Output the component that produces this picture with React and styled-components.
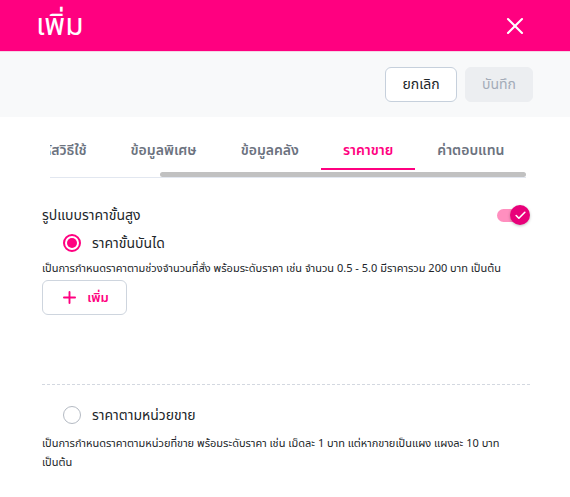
import React, { useLayoutEffect, useRef, useState } from "react";
import styled, { createGlobalStyle } from "styled-components";
import { X, Plus, Check } from "lucide-react";

const PINK = "#ff0080";

const GlobalStyle = createGlobalStyle`
  body {
    margin: 0;
    background: #fff;
    font-family: "Noto Sans Thai", "Noto Sans", "Liberation Sans", sans-serif;
    color: #212529;
  }
`;

const Page = styled.div`
  width: 570px;
  min-height: 497px;
  background: #fff;
`;

const Header = styled.header`
  height: 52px;
  background: ${PINK};
  display: flex;
  align-items: center;
  justify-content: space-between;
  padding: 0 41px 0 36px;
  box-sizing: border-box;
  border-bottom: 1px solid #f4d6e5;
`;

const Title = styled.h1`
  margin: 0;
  font-size: 30px;
  font-weight: 400;
  color: #fff;
  line-height: 1;
`;

const CloseButton = styled.button`
  border: 0;
  background: transparent;
  color: #fff;
  padding: 0;
  display: flex;
  cursor: pointer;
`;

const Toolbar = styled.div`
  height: 65px;
  background: #f8f9fa;
  display: flex;
  align-items: center;
  justify-content: flex-end;
  gap: 8px;
  padding-right: 37px;
`;

const Button = styled.button`
  height: 35px;
  width: ${(p) => p.$w}px;
  border-radius: 6px;
  font-family: inherit;
  font-size: 14px;
  font-weight: 400;
  border: 1px solid ${(p) => (p.$muted ? "#eceef1" : "#c6d0dc")};
  background: ${(p) => (p.$muted ? "#eceef1" : "#fff")};
  color: ${(p) => (p.$muted ? "#a3abb8" : "#212529")};
`;

const TabsWrap = styled.div`
  margin: 13px 44px 0 50px;
  border-bottom: 1px solid #e2e7f0;
`;

const TabsScroller = styled.div`
  display: flex;
  overflow-x: auto;
  scrollbar-width: none;
  &::-webkit-scrollbar {
    display: none;
  }
`;

const Tab = styled.div`
  position: relative;
  flex: none;
  height: 40px;
  padding: 0 22px;
  display: flex;
  align-items: center;
  font-size: 14px;
  font-weight: 600;
  white-space: nowrap;
  color: ${(p) => (p.$active ? PINK : "#6c737f")};
  &::after {
    content: "";
    position: absolute;
    left: 0;
    right: 0;
    bottom: 0;
    height: 2px;
    background: ${(p) => (p.$active ? PINK : "transparent")};
  }
`;

const Track = styled.div`
  height: 5px;
  padding: 2px 0 0;
`;

const Thumb = styled.div`
  height: 5px;
  border-radius: 3px;
  background: #c1c1c1;
`;

const Body = styled.div`
  padding: 25px 40px 20px 42px;
`;

const Row = styled.div`
  display: flex;
  align-items: center;
  justify-content: space-between;
  height: 24px;
`;

const Label = styled.span`
  font-size: 14px;
  color: #212529;
`;

const Toggle = styled.div`
  position: relative;
  width: 33px;
  height: 20px;
  display: flex;
  align-items: center;
`;

const ToggleTrack = styled.div`
  width: 28px;
  height: 13px;
  border-radius: 7px;
  background: #ff8fbf;
`;

const Knob = styled.div`
  position: absolute;
  right: 0;
  top: 0;
  width: 20px;
  height: 20px;
  border-radius: 50%;
  background: #e8007a;
  box-shadow: 0 1px 3px rgba(0, 0, 0, 0.25);
  display: flex;
  align-items: center;
  justify-content: center;
  color: #fff;
`;

const RadioRow = styled.label`
  display: flex;
  align-items: center;
  gap: 11px;
  height: 20px;
  padding-left: 21px;
  margin-top: ${(p) => p.$top}px;
`;

const Radio = styled.span`
  width: 18px;
  height: 18px;
  box-sizing: border-box;
  border-radius: 50%;
  border: ${(p) => (p.$checked ? `2px solid ${PINK}` : "1.5px solid #b4bac3")};
  display: flex;
  align-items: center;
  justify-content: center;
  &::after {
    content: "";
    width: 10px;
    height: 10px;
    border-radius: 50%;
    background: ${(p) => (p.$checked ? PINK : "transparent")};
  }
`;

const Desc = styled.p`
  margin: ${(p) => p.$top}px 0 0;
  font-size: 11px;
  line-height: 19px;
  color: #212529;
  max-width: 475px;
`;

const AddButton = styled.button`
  margin-top: 2px;
  width: 85px;
  height: 35px;
  border: 1px solid #ced5de;
  border-radius: 6px;
  background: #fff;
  display: flex;
  align-items: center;
  justify-content: center;
  gap: 8px;
  color: ${PINK};
  font-family: inherit;
  font-size: 13px;
  font-weight: 600;
`;

const Divider = styled.hr`
  margin: 69px 0 0;
  border: 0;
  border-top: 1px dashed #d3d8e0;
`;

const tabs = ["ข้อมูลทั่วไป", "รหัสวิธีใช้", "ข้อมูลพิเศษ", "ข้อมูลคลัง", "ราคาขาย", "ค่าตอบแทน"];

function TabBar() {
  const ref = useRef(null);
  const [thumb, setThumb] = useState({ left: 0, width: 0 });

  useLayoutEffect(() => {
    const el = ref.current;
    el.scrollLeft = el.scrollWidth;
    const ratio = el.clientWidth / el.scrollWidth;
    setThumb({ left: el.scrollLeft * ratio, width: el.clientWidth * ratio });
  }, []);

  return (
    <TabsWrap>
      <TabsScroller ref={ref}>
        {tabs.map((t) => (
          <Tab key={t} $active={t === "ราคาขาย"}>
            {t}
          </Tab>
        ))}
      </TabsScroller>
      <Track>
        <Thumb style={{ marginLeft: thumb.left, width: thumb.width }} />
      </Track>
    </TabsWrap>
  );
}

export default function App() {
  return (
    <Page>
      <GlobalStyle />
      <Header>
        <Title>เพิ่ม</Title>
        <CloseButton>
          <X size={28} strokeWidth={1.8} />
        </CloseButton>
      </Header>
      <Toolbar>
        <Button $w={72}>ยกเลิก</Button>
        <Button $w={68} $muted>
          บันทึก
        </Button>
      </Toolbar>
      <TabBar />
      <Body>
        <Row>
          <Label>รูปแบบราคาขั้นสูง</Label>
          <Toggle>
            <ToggleTrack />
            <Knob>
              <Check size={13} strokeWidth={3} />
            </Knob>
          </Toggle>
        </Row>
        <RadioRow $top={6}>
          <Radio $checked />
          <Label>ราคาขั้นบันได</Label>
        </RadioRow>
        <Desc $top={6}>
          เป็นการกำหนดราคาตามช่วงจำนวนที่สั่ง พร้อมระดับราคา เช่น จำนวน 0.5 - 5.0 มีราคารวม 200 บาท เป็นต้น
        </Desc>
        <AddButton>
          <Plus size={19} strokeWidth={2.4} />
          เพิ่ม
        </AddButton>
        <Divider />
        <RadioRow $top={20}>
          <Radio />
          <Label>ราคาตามหน่วยขาย</Label>
        </RadioRow>
        <Desc $top={9}>
          เป็นการกำหนดราคาตามหน่วยที่ขาย พร้อมระดับราคา เช่น เม็ดละ 1 บาท แต่หากขายเป็นแผง แผงละ 10 บาท เป็นต้น
        </Desc>
      </Body>
    </Page>
  );
}
